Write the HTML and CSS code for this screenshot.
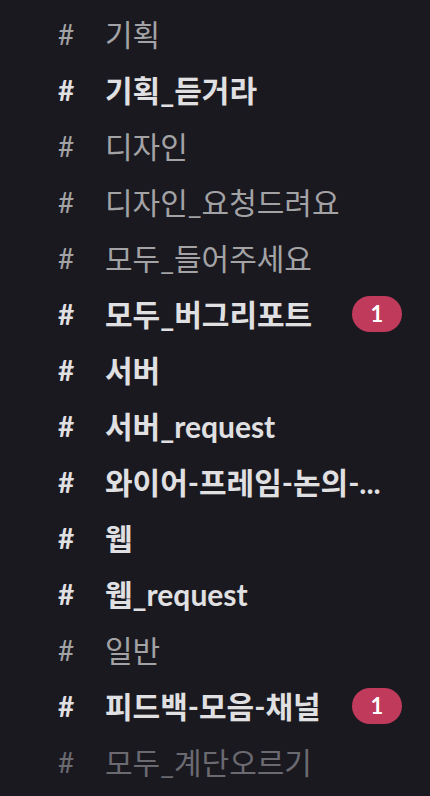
FILE: index.html
```html
<!doctype html>
<html lang="ko">

<head>
  <meta charset="UTF-8" />
  <link rel="stylesheet" href="styles.css">
</head>

<body>
  <ul class="channel-list">
    <li class="channel"><span class="hash">#</span><span class="name">기획</span></li>
    <li class="channel unread"><span class="hash">#</span><span class="name">기획_듣거라</span></li>
    <li class="channel"><span class="hash">#</span><span class="name">디자인</span></li>
    <li class="channel"><span class="hash">#</span><span class="name">디자인_요청드려요</span></li>
    <li class="channel"><span class="hash">#</span><span class="name">모두_들어주세요</span></li>
    <li class="channel unread"><span class="hash">#</span><span class="name">모두_버그리포트</span><span class="badge">1</span></li>
    <li class="channel unread"><span class="hash">#</span><span class="name">서버</span></li>
    <li class="channel unread"><span class="hash">#</span><span class="name">서버_request</span></li>
    <li class="channel unread"><span class="hash">#</span><span class="name">와이어-프레임-논의-...</span></li>
    <li class="channel unread"><span class="hash">#</span><span class="name">웹</span></li>
    <li class="channel unread"><span class="hash">#</span><span class="name">웹_request</span></li>
    <li class="channel"><span class="hash">#</span><span class="name">일반</span></li>
    <li class="channel unread"><span class="hash">#</span><span class="name">피드백-모음-채널</span><span class="badge">1</span></li>
    <li class="channel muted"><span class="hash">#</span><span class="name">모두_계단오르기</span></li>
  </ul>
</body>

</html>
```

FILE: styles.css
```css
body {
  margin: 0;
  padding: 0;
  background-color: #1a1920;
  font-family: Lato, "Noto Sans CJK KR", sans-serif;
}

.channel-list {
  list-style: none;
  margin: 0;
  padding: 6px 0 0 0;
}

.channel {
  display: flex;
  align-items: center;
  height: 56px;
  padding: 0 28px 0 58px;
  color: #a3a3a6;
  font-size: 30px;
  line-height: 36px;
  font-weight: 400;
}

.channel.unread {
  color: #e0e0e2;
  font-weight: 700;
}

.channel.muted {
  color: #6b6a70;
}

.hash {
  width: 47px;
  flex: none;
  font-size: 28px;
}

.name {
  flex: 1;
  white-space: nowrap;
  overflow: hidden;
  text-overflow: ellipsis;
}

.badge {
  flex: none;
  width: 50px;
  height: 36px;
  border-radius: 18px;
  background-color: #bf3a5b;
  color: #ffffff;
  font-size: 22px;
  line-height: 36px;
  font-weight: 700;
  display: flex;
  align-items: center;
  justify-content: center;
}
```
